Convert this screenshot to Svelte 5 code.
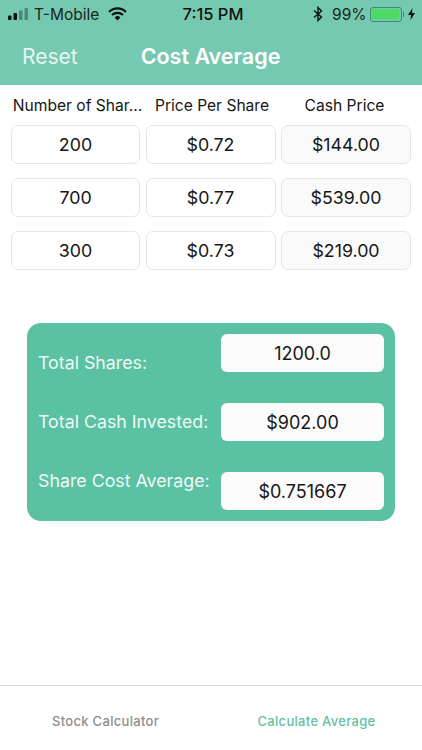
<script>
    const rows = [
        { shares: "200", price: "$0.72", cash: "$144.00" },
        { shares: "700", price: "$0.77", cash: "$539.00" },
        { shares: "300", price: "$0.73", cash: "$219.00" }
    ];
    const labels = ["Total Shares:", "Total Cash Invested:", "Share Cost Average:"];
    const totals = ["1200.0", "$902.00", "$0.751667"];
</script>

<div class="page">
    <header>
        <div class="status">
            <div class="status-left">
                <svg class="signal" width="21" height="12" viewBox="0 0 21 12">
                    <rect x="0" y="7.5" width="3.5" height="4.5" rx="1" fill="#111" />
                    <rect x="5.5" y="5" width="3.5" height="7" rx="1" fill="#111" />
                    <rect x="11" y="2.5" width="3.5" height="9.5" rx="1" fill="#4c8878" />
                    <rect x="16.5" y="0" width="3.5" height="12" rx="1" fill="#4c8878" />
                </svg>
                <span class="carrier">T-Mobile</span>
                <svg class="wifi" width="19" height="14" viewBox="0 0 19 14">
                    <path d="M1 5 A12 12 0 0 1 18 5" fill="none" stroke="#111" stroke-width="2.2" />
                    <path d="M4 8 A8 8 0 0 1 15 8" fill="none" stroke="#111" stroke-width="2.2" />
                    <path d="M6.6 10.4 A4.2 4.2 0 0 1 12.4 10.4 L9.5 13.6 Z" fill="#111" />
                </svg>
            </div>
            <span class="time">7:15 PM</span>
            <div class="status-right">
                <svg width="10" height="16" viewBox="0 0 10 16">
                    <path d="M1 4.5 L8.5 11 L5 14.5 V1.5 L8.5 5 L1 11.5" fill="none" stroke="#111" stroke-width="1.4" />
                </svg>
                <span class="pct">99%</span>
                <div class="battery"><div class="level"></div></div>
                <div class="nub"></div>
                <svg class="bolt" width="7" height="12" viewBox="0 0 7 12">
                    <path d="M4.5 0 L0 7 H3 L2.5 12 L7 5 H4 Z" fill="#111" />
                </svg>
            </div>
        </div>
        <div class="nav">
            <span class="reset">Reset</span>
            <span class="title">Cost Average</span>
        </div>
    </header>

    <div class="heads">
        <span>Number of Shar...</span>
        <span>Price Per Share</span>
        <span>Cash Price</span>
    </div>

    <div class="grid">
        {#each rows as row}
            <div class="cell">{row.shares}</div>
            <div class="cell">{row.price}</div>
            <div class="cell readonly">{row.cash}</div>
        {/each}
    </div>

    <section class="card">
        <div class="labels">
            {#each labels as label}
                <span>{label}</span>
            {/each}
        </div>
        <div class="values">
            {#each totals as total}
                <div class="value">{total}</div>
            {/each}
        </div>
    </section>

    <nav class="tabs">
        <span>Stock Calculator</span>
        <span class="active">Calculate Average</span>
    </nav>
</div>

<style>
    :global(body) {
        margin: 0;
        background: #fff;
    }

    .page {
        display: flex;
        flex-direction: column;
        height: 750px;
        overflow: hidden;
        font-family: Inter, "Liberation Sans", sans-serif;
        color: #161616;
    }

    header {
        height: 85px;
        background: #74c9b0;
    }

    .status {
        display: grid;
        grid-template-columns: 1fr auto 1fr;
        align-items: center;
        height: 28px;
        padding: 0 7px 0 8px;
        font-size: 15.5px;
        color: #1b2522;
    }

    .status-left, .status-right {
        display: flex;
        align-items: center;
    }

    .status-right {
        justify-content: flex-end;
    }

    .carrier {
        margin-left: 5px;
    }

    .wifi {
        margin-left: 9px;
    }

    .time {
        margin-left: 3px;
        font-size: 16.5px;
        font-weight: 500;
        color: #111;
    }

    .pct {
        margin-left: 9px;
    }

    .battery {
        box-sizing: border-box;
        width: 32px;
        height: 15px;
        margin-left: 3px;
        padding: 1.5px;
        border: 1px solid #3f8a76;
        border-radius: 3px;
    }

    .level {
        height: 100%;
        background: #4cd964;
        border-radius: 1.5px;
    }

    .nub {
        width: 1.5px;
        height: 5px;
        margin-left: 1px;
        background: #3f8a76;
    }

    .bolt {
        margin-left: 4px;
    }

    .nav {
        display: flex;
        align-items: center;
        height: 56px;
        padding-left: 22px;
        color: #fff;
    }

    .reset {
        font-size: 21px;
        color: #e6f6f1;
    }

    .title {
        margin-left: 63px;
        font-size: 21.5px;
        font-weight: 600;
    }

    .heads {
        display: grid;
        grid-template-columns: 135px 130px 131px;
        column-gap: 2px;
        height: 40px;
        align-items: center;
        padding-left: 10px;
        font-size: 15.6px;
        text-align: center;
        white-space: nowrap;
    }

    .grid {
        display: grid;
        grid-template-columns: 129px 130px 130px;
        column-gap: 5.5px;
        row-gap: 14px;
        padding: 0 11px;
    }

    .cell {
        display: flex;
        align-items: center;
        justify-content: center;
        box-sizing: border-box;
        height: 39px;
        border: 1.5px solid #e6e6e6;
        border-radius: 7px;
        font-size: 17.8px;
    }

    .readonly {
        background: #fafafa;
    }

    .card {
        display: flex;
        justify-content: space-between;
        box-sizing: border-box;
        height: 198px;
        margin: 53px 27px 0;
        padding: 11px;
        background: #5ac1a3;
        border-radius: 14px;
    }

    .labels {
        display: flex;
        flex-direction: column;
        gap: 35px;
        padding-top: 17px;
        font-size: 17.8px;
        line-height: 24px;
        color: #eef9f5;
        white-space: nowrap;
    }

    .values {
        display: flex;
        flex-direction: column;
        gap: 31px;
        width: 163px;
    }

    .value {
        display: flex;
        align-items: center;
        justify-content: center;
        height: 38px;
        background: #fbfbfb;
        border-radius: 6px;
        font-size: 18px;
    }

    .tabs {
        display: grid;
        grid-template-columns: 1fr 1fr;
        align-items: center;
        box-sizing: border-box;
        height: 65px;
        margin-top: auto;
        padding-top: 6px;
        border-top: 1.5px solid #d6d6d6;
        font-size: 13px;
        font-weight: 500;
        letter-spacing: 0.3px;
        color: #8e8e8e;
        text-align: center;
    }

    .active {
        color: #66bfa4;
    }
</style>
